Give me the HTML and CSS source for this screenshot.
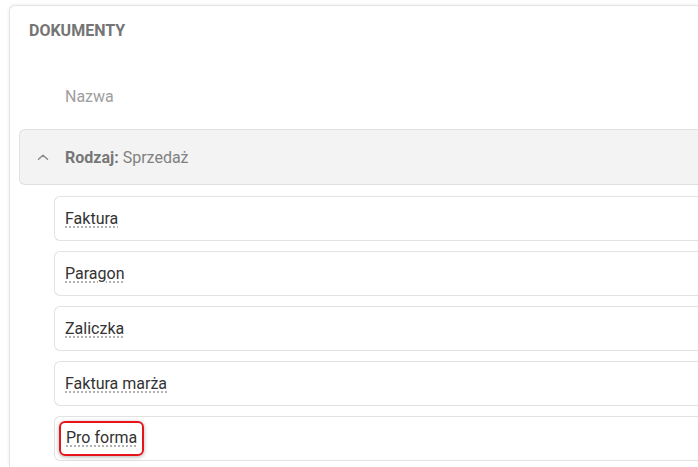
FILE: index.html
```html
<!DOCTYPE html>
<html lang="pl">
<head>
    <meta charset="UTF-8">
    <meta name="viewport" content="width=device-width, initial-scale=1.0">
    <title>Dokumenty</title>
    <link rel="stylesheet" href="styles.css">
</head>
<body>

    <div class="card">
        <div class="card-title">DOKUMENTY</div>

        <div class="col-head">Nazwa</div>

        <div class="group">
            <svg class="chevron" width="12" height="8" viewBox="0 0 12 8" fill="none" xmlns="http://www.w3.org/2000/svg">
                <path d="M1.5 6.2L6 2.2L10.5 6.2" stroke="#8a8a8a" stroke-width="1.5" stroke-linecap="round" stroke-linejoin="round"/>
            </svg>
            <span class="group-label">Rodzaj:</span>
            <span class="group-value">Sprzedaż</span>
        </div>

        <div class="rows">
            <div class="row"><span class="name">Faktura</span></div>
            <div class="row"><span class="name">Paragon</span></div>
            <div class="row"><span class="name">Zaliczka</span></div>
            <div class="row"><span class="name">Faktura marża</span></div>
            <div class="row"><span class="name highlight">Pro forma</span></div>
        </div>
    </div>

</body>
</html>
```

FILE: styles.css
```css
* {
    margin: 0;
    padding: 0;
    box-sizing: border-box;
    font-family: Roboto, 'Noto Sans', sans-serif;
}

body {
    background: #ffffff;
    overflow: hidden;
    width: 698px;
    height: 467px;
}

/* card runs off the right and bottom edge of the view */
.card {
    margin: 5px 0 0 9px;
    width: 689px;
    height: 462px;
    background: #fff;
    border: 1px solid #e4e4e4;
    border-right: none;
    border-bottom: none;
    border-radius: 6px 0 0 0;
    box-shadow: -1px -1px 3px rgba(0, 0, 0, 0.05);
    padding: 0 0 0 9px;
    overflow: hidden;
}

.card-title {
    padding: 14px 0 0 10px;
    font-size: 16px;
    line-height: 22px;
    font-weight: 700;
    color: #757575;
}

.col-head {
    padding: 44px 0 0 46px;
    font-size: 16px;
    line-height: 22px;
    color: #9e9e9e;
}

.group {
    margin-top: 21px;
    height: 56px;
    display: flex;
    align-items: center;
    background: #f3f3f3;
    border: 1px solid #e0e0e0;
    border-right: none;
    border-radius: 6px 0 0 6px;
    padding-left: 17px;
    font-size: 16px;
    color: #808080;
}

.chevron {
    margin-right: 16px;
}

.group-label {
    font-weight: 700;
    color: #777;
    margin-right: 4px;
}

.rows {
    margin: 11px 0 0 35px;
    display: flex;
    flex-direction: column;
    gap: 10px;
}

.row {
    height: 45px;
    flex-shrink: 0;
    display: flex;
    align-items: center;
    border: 1px solid #e2e2e2;
    border-right: none;
    border-radius: 6px 0 0 6px;
    padding-left: 10px;
    font-size: 16px;
    color: #333;
}

.name {
    text-decoration: underline dotted #a0a0a0;
    text-underline-offset: 3px;
    line-height: 22px;
}

.highlight {
    margin-left: -6px;
    padding: 4px 5px 5px 5px;
    border: 2px solid #e8141c;
    border-radius: 6px;
    box-shadow: 0 1px 4px rgba(0, 0, 0, 0.3);
}
```
